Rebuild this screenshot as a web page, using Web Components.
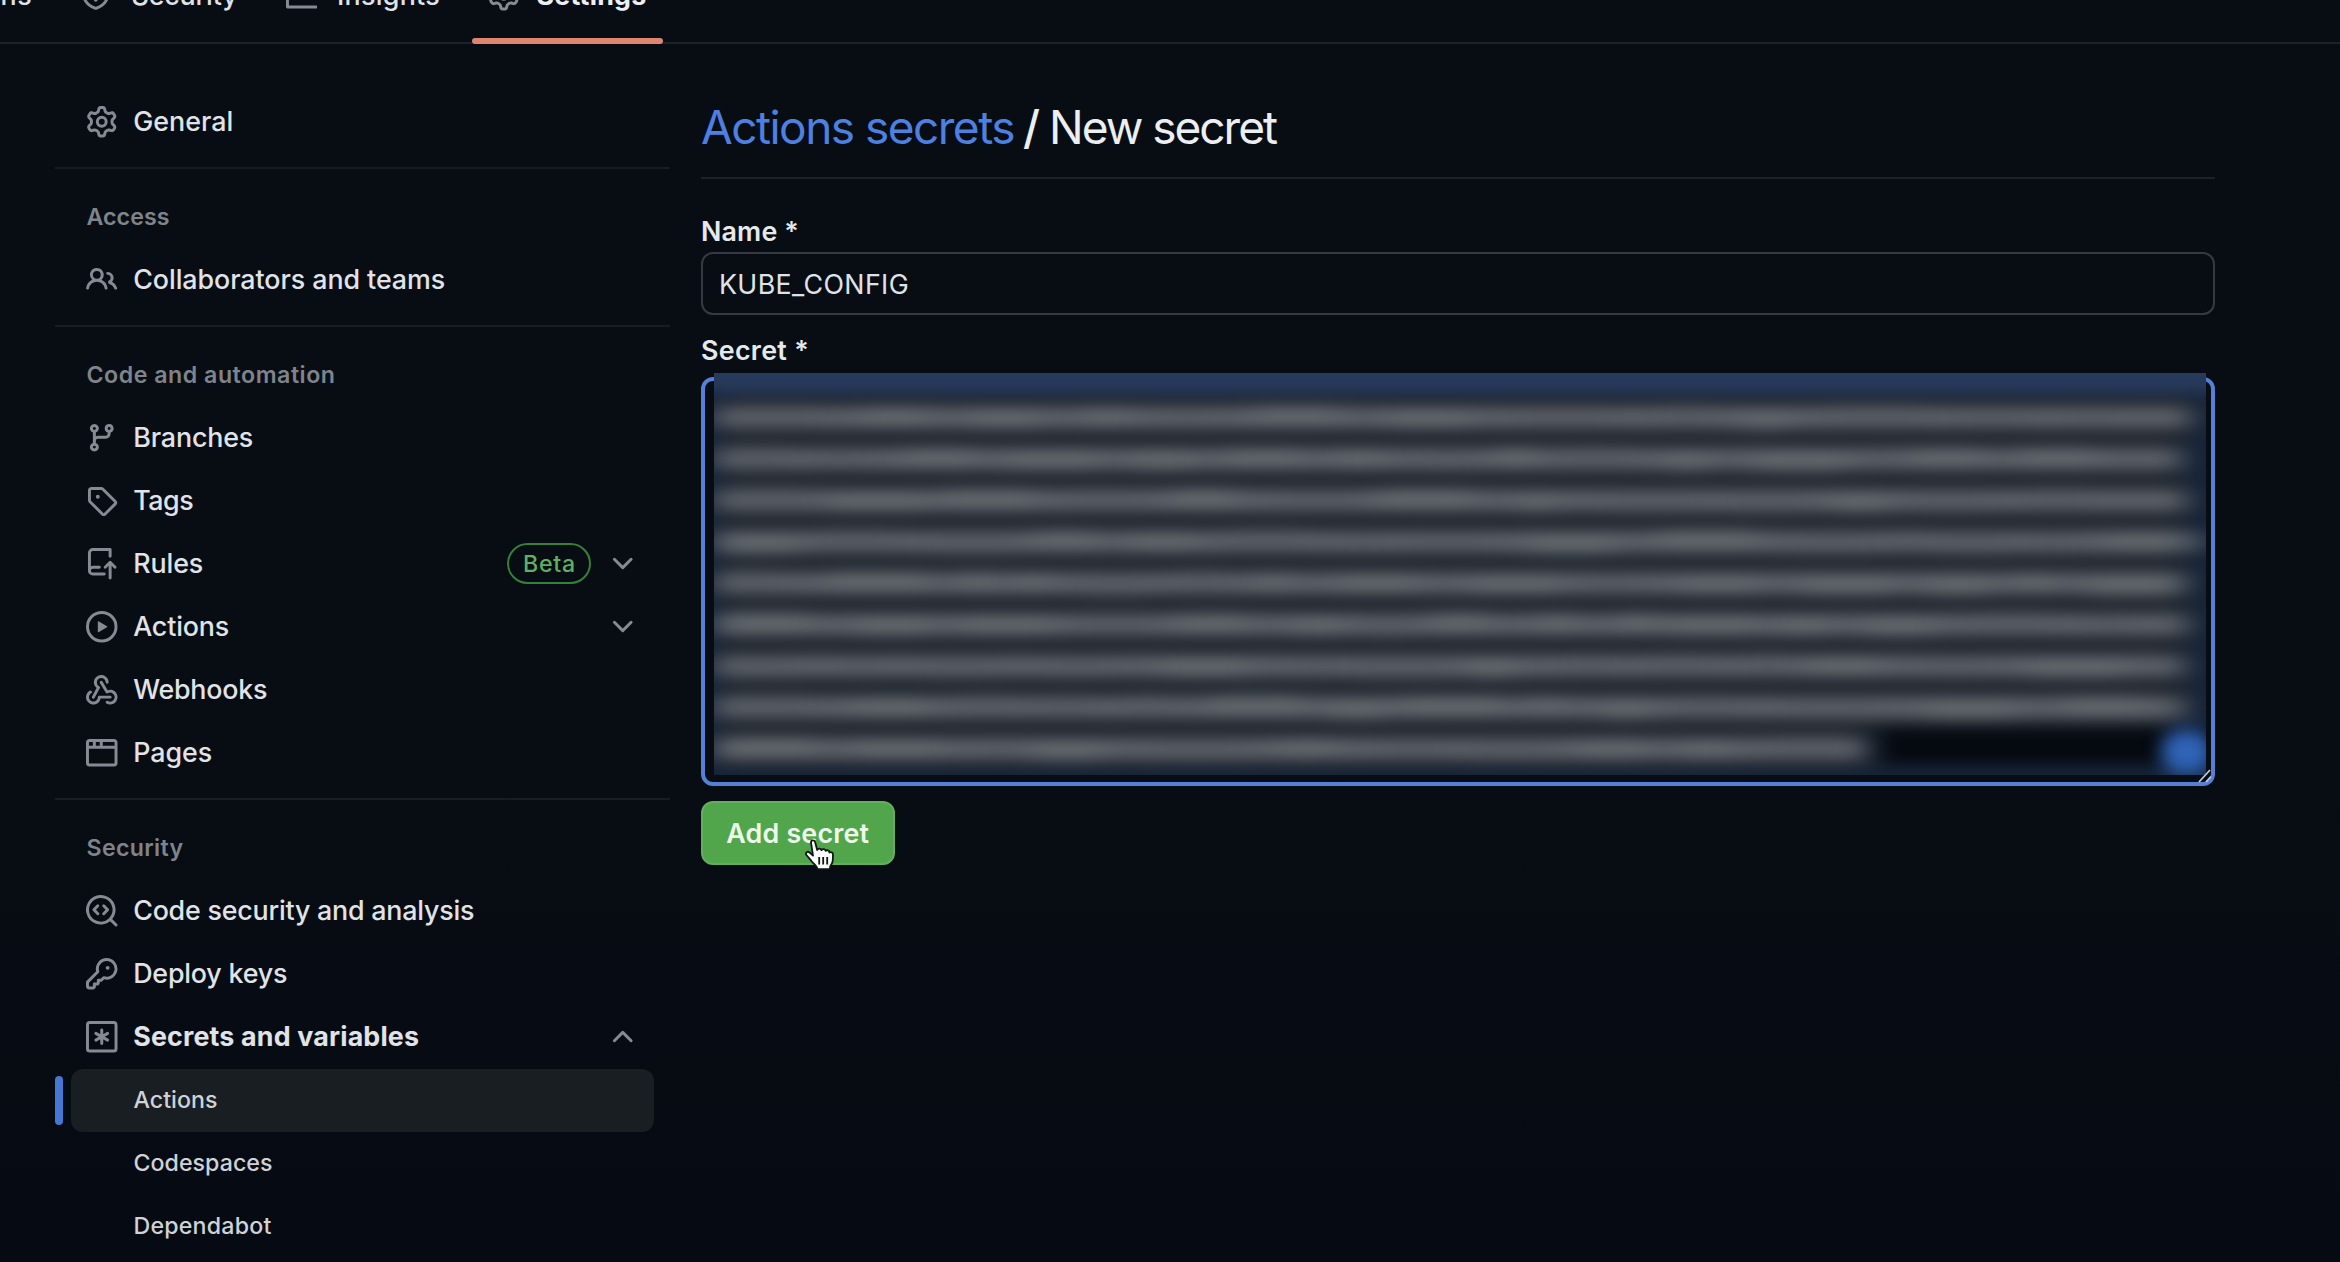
<!DOCTYPE html>
<html lang="en">
<head>
<meta charset="utf-8">
<title>New secret</title>
<style>
html,body{margin:0;height:100%;background:#070c13;overflow:hidden}
body{font-family:Inter,"Liberation Sans",sans-serif;color:#e3e6ea;-webkit-font-smoothing:antialiased}
</style>
</head>
<body>
<settings-page></settings-page>
<script>
const ICONS = {
gear:'<path d="M8 0a8.2 8.2 0 0 1 .701.031C9.444.095 9.99.645 10.16 1.29l.288 1.107c.018.066.079.158.212.224.231.114.454.243.668.386.123.082.233.09.299.071l1.103-.303c.644-.176 1.392.021 1.82.63.27.385.506.792.704 1.218.315.675.111 1.422-.364 1.891l-.814.806c-.049.048-.098.147-.088.294.016.257.016.515 0 .772-.01.147.038.246.088.294l.814.806c.475.469.679 1.216.364 1.891a7.977 7.977 0 0 1-.704 1.217c-.428.61-1.176.807-1.82.63l-1.102-.302c-.067-.019-.177-.011-.3.071a5.909 5.909 0 0 1-.668.386c-.133.066-.194.158-.211.224l-.29 1.106c-.168.646-.715 1.196-1.458 1.26a8.006 8.006 0 0 1-1.402 0c-.743-.064-1.289-.614-1.458-1.26l-.289-1.106c-.018-.066-.079-.158-.212-.224a5.738 5.738 0 0 1-.668-.386c-.123-.082-.233-.09-.299-.071l-1.103.303c-.644.176-1.392-.021-1.82-.63a8.12 8.12 0 0 1-.704-1.218c-.315-.675-.111-1.422.363-1.891l.815-.806c.05-.048.098-.147.088-.294a6.214 6.214 0 0 1 0-.772c.01-.147-.038-.246-.088-.294l-.815-.806C.635 6.045.431 5.298.746 4.623a7.92 7.92 0 0 1 .704-1.217c.428-.61 1.176-.807 1.82-.63l1.102.302c.067.019.177.011.3-.071.214-.143.437-.272.668-.386.133-.066.194-.158.211-.224l.29-1.106C6.009.645 6.556.095 7.299.03 7.53.01 7.764 0 8 0Zm-.571 1.525c-.036.003-.108.036-.137.146l-.289 1.105c-.147.561-.549.967-.998 1.189-.173.086-.34.183-.5.29-.417.278-.97.423-1.529.27l-1.103-.303c-.109-.03-.175.016-.195.045-.22.312-.412.644-.573.99-.014.031-.021.11.059.19l.815.806c.411.406.562.957.53 1.456a4.709 4.709 0 0 0 0 .582c.032.499-.119 1.05-.53 1.456l-.815.806c-.081.08-.073.159-.059.19.162.346.353.677.573.989.02.03.085.076.195.046l1.102-.303c.56-.153 1.113-.008 1.53.27.161.107.328.204.501.29.447.222.85.629.997 1.189l.289 1.105c.029.109.101.143.137.146a6.6 6.6 0 0 0 1.142 0c.036-.003.108-.036.137-.146l.289-1.105c.147-.561.549-.967.998-1.189.173-.086.34-.183.5-.29.417-.278.97-.423 1.529-.27l1.103.303c.109.029.175-.016.195-.045.22-.313.411-.644.573-.99.014-.031.021-.11-.059-.19l-.815-.806c-.411-.406-.562-.957-.53-1.456a4.709 4.709 0 0 0 0-.582c-.032-.499.119-1.05.53-1.456l.815-.806c.081-.08.073-.159.059-.19a6.464 6.464 0 0 0-.573-.989c-.02-.03-.085-.076-.195-.046l-1.102.303c-.56.153-1.113.008-1.53-.27a4.44 4.44 0 0 0-.501-.29c-.447-.222-.85-.629-.997-1.189l-.289-1.105c-.029-.11-.101-.143-.137-.146a6.6 6.6 0 0 0-1.142 0ZM11 8a3 3 0 1 1-6 0 3 3 0 0 1 6 0ZM9.5 8a1.5 1.5 0 1 0-3.001.001A1.5 1.5 0 0 0 9.5 8Z"/>',
shield:'<path d="M7.467.133a1.748 1.748 0 0 1 1.066 0l5.25 1.68A1.75 1.75 0 0 1 15 3.48V7c0 1.566-.32 3.182-1.303 4.682-.983 1.498-2.585 2.813-5.032 3.855a1.697 1.697 0 0 1-1.33 0c-2.447-1.042-4.049-2.357-5.032-3.855C1.32 10.182 1 8.566 1 7V3.48a1.75 1.75 0 0 1 1.217-1.667Zm.61 1.429a.25.25 0 0 0-.153 0l-5.25 1.68a.25.25 0 0 0-.174.238V7c0 1.358.275 2.666 1.057 3.86.784 1.194 2.121 2.34 4.366 3.297a.196.196 0 0 0 .154 0c2.245-.956 3.582-2.104 4.366-3.298C13.225 9.666 13.5 8.36 13.5 7V3.48a.251.251 0 0 0-.174-.237l-5.25-1.68ZM8.75 4.75v3a.75.75 0 0 1-1.5 0v-3a.75.75 0 0 1 1.5 0ZM9 10.5a1 1 0 1 1-2 0 1 1 0 0 1 2 0Z"/>',
graph:'<path d="M1.5 1.75V13.5h13.75a.75.75 0 0 1 0 1.5H.75a.75.75 0 0 1-.75-.75V1.75a.75.75 0 0 1 1.5 0Zm14.28 2.53-5.25 5.25a.75.75 0 0 1-1.06 0L7 7.06 4.28 9.78a.751.751 0 0 1-1.042-.018.751.751 0 0 1-.018-1.042l3.25-3.25a.75.75 0 0 1 1.06 0L10 7.94l4.72-4.72a.751.751 0 0 1 1.042.018.751.751 0 0 1 .018 1.042Z"/>',
people:'<path d="M2 5.5a3.5 3.5 0 1 1 5.898 2.549 5.508 5.508 0 0 1 3.034 4.084.75.75 0 1 1-1.482.235 4 4 0 0 0-7.9 0 .75.75 0 0 1-1.482-.236A5.507 5.507 0 0 1 3.102 8.05 3.493 3.493 0 0 1 2 5.5ZM11 4a3.001 3.001 0 0 1 2.22 5.018 5.01 5.01 0 0 1 2.56 3.012.749.749 0 0 1-.885.954.752.752 0 0 1-.549-.514 3.507 3.507 0 0 0-2.522-2.372.75.75 0 0 1-.574-.73v-.352a.75.75 0 0 1 .416-.672A1.5 1.5 0 0 0 11 5.5.75.75 0 0 1 11 4Zm-5.5-.5a2 2 0 1 0-.001 3.999A2 2 0 0 0 5.5 3.5Z"/>',
branch:'<path d="M9.5 3.25a2.25 2.25 0 1 1 3 2.122V6A2.5 2.5 0 0 1 10 8.5H6a1 1 0 0 0-1 1v1.128a2.251 2.251 0 1 1-1.5 0V5.372a2.25 2.25 0 1 1 1.5 0v1.836A2.493 2.493 0 0 1 6 7h4a1 1 0 0 0 1-1v-.628A2.25 2.25 0 0 1 9.5 3.25Zm-6 0a.75.75 0 1 0 1.5 0 .75.75 0 0 0-1.5 0Zm8.25-.75a.75.75 0 1 0 0 1.5.75.75 0 0 0 0-1.5ZM4.25 12a.75.75 0 1 0 0 1.5.75.75 0 0 0 0-1.5Z"/>',
tag:'<path d="M1 7.775V2.75C1 1.784 1.784 1 2.75 1h5.025c.464 0 .91.184 1.238.513l6.25 6.25a1.75 1.75 0 0 1 0 2.474l-5.026 5.026a1.75 1.75 0 0 1-2.474 0l-6.25-6.25A1.752 1.752 0 0 1 1 7.775Zm1.5 0c0 .066.026.13.073.177l6.25 6.25a.25.25 0 0 0 .354 0l5.025-5.025a.25.25 0 0 0 0-.354l-6.25-6.25a.25.25 0 0 0-.177-.073H2.75a.25.25 0 0 0-.25.25ZM6 5a1 1 0 1 1 0 2 1 1 0 0 1 0-2Z"/>',
push:'<path d="M1 2.5A2.5 2.5 0 0 1 3.5 0h8.75a.75.75 0 0 1 .75.75v3.5a.75.75 0 0 1-1.5 0V1.5h-8a1 1 0 0 0-1 1v6.708A2.493 2.493 0 0 1 3.5 9h3.25a.75.75 0 0 1 0 1.5H3.5a1 1 0 0 0 0 2h5.75a.75.75 0 0 1 0 1.5H3.5A2.5 2.5 0 0 1 1 11.5Zm13.23 7.79-1.225-1.225v6.184a.75.75 0 0 1-1.5 0V9.066L10.28 10.29a.75.75 0 0 1-1.06-1.061l2.505-2.504a.75.75 0 0 1 1.06 0L15.29 9.23a.751.751 0 0 1-.018 1.042.751.751 0 0 1-1.042.018Z"/>',
play:'<path d="M8 0a8 8 0 1 1 0 16A8 8 0 0 1 8 0ZM1.5 8a6.5 6.5 0 1 0 13 0 6.5 6.5 0 0 0-13 0Zm4.879-2.773 4.264 2.559a.25.25 0 0 1 0 .428l-4.264 2.559A.25.25 0 0 1 6 10.559V5.442a.25.25 0 0 1 .379-.215Z"/>',
webhook:'<path d="M5.5 4.25a2.25 2.25 0 0 1 4.5 0 .75.75 0 0 0 1.5 0 3.75 3.75 0 1 0-6.14 2.889l-2.272 4.258a.75.75 0 0 0 1.324.706L7 7.25a.75.75 0 0 0-.309-1.015A2.25 2.25 0 0 1 5.5 4.25Z"/><path d="M7.364 3.607a.75.75 0 0 1 1.03.257l2.608 4.349a3.75 3.75 0 1 1-.628 6.785.75.75 0 0 1 .752-1.299 2.25 2.25 0 1 0-.033-3.88.75.75 0 0 1-1.03-.256L7.107 4.636a.75.75 0 0 1 .257-1.03Z"/><path d="M2.9 8.776A.75.75 0 0 1 2.625 9.8 2.25 2.25 0 1 0 6 11.75a.75.75 0 0 1 .75-.751h5.5a.75.75 0 0 1 0 1.5H7.425a3.751 3.751 0 1 1-5.55-3.998.75.75 0 0 1 1.024.274Z"/>',
browser:'<path d="M0 2.75C0 1.784.784 1 1.75 1h12.5c.966 0 1.75.784 1.75 1.75v10.5A1.75 1.75 0 0 1 14.25 15H1.75A1.75 1.75 0 0 1 0 13.25ZM14.5 6h-13v7.25c0 .138.112.25.25.25h12.5a.25.25 0 0 0 .25-.25Zm-6-3.5v2h6V2.75a.25.25 0 0 0-.25-.25ZM5 2.5v2h2v-2Zm-3.25 0a.25.25 0 0 0-.25.25V4.5h2v-2Z"/>',
codescan:'<path d="M8.47 4.97a.75.75 0 0 0 0 1.06L9.94 7.5 8.47 8.97a.75.75 0 1 0 1.06 1.06l2-2a.75.75 0 0 0 0-1.06l-2-2a.75.75 0 0 0-1.06 0ZM6.53 6.03a.75.75 0 0 0-1.06-1.06l-2 2a.75.75 0 0 0 0 1.06l2 2a.75.75 0 1 0 1.06-1.06L5.06 7.5l1.47-1.47Z"/><path d="M12.246 13.307a7.501 7.501 0 1 1 1.06-1.06l2.474 2.473a.749.749 0 1 1-1.06 1.06ZM1.5 7.5a6.002 6.002 0 0 0 3.608 5.504 6.002 6.002 0 0 0 6.486-1.117.748.748 0 0 1 .292-.293A6 6 0 1 0 1.5 7.5Z"/>',
key:'<path d="M10.5 0a5.499 5.499 0 1 1-1.288 10.848l-.932.932a.749.749 0 0 1-.53.22H7v.75a.749.749 0 0 1-.22.53l-.5.5a.749.749 0 0 1-.53.22H5v.75a.749.749 0 0 1-.22.53l-.5.5a.749.749 0 0 1-.53.22h-2A1.75 1.75 0 0 1 0 14.25v-2c0-.199.079-.389.22-.53l4.932-4.932A5.5 5.5 0 0 1 10.5 0Zm-4 5.5c-.001.431.069.86.205 1.269a.75.75 0 0 1-.181.768L1.5 12.56v1.69c0 .138.112.25.25.25h1.69l.06-.06v-1.19a.75.75 0 0 1 .75-.75h1.19l.06-.06v-1.19a.75.75 0 0 1 .75-.75h1.19l1.023-1.025a.75.75 0 0 1 .768-.18A4 4 0 1 0 6.5 5.5ZM11 6a1 1 0 1 1 0-2 1 1 0 0 1 0 2Z"/>',
asterisk:'<g fill="none" stroke="currentColor"><rect x=".75" y=".75" width="14.5" height="14.5" rx="1.2" stroke-width="1.5"/><path d="M8 4.6v6.8M5 6.3l6 3.4M11 6.3 5 9.7" stroke-width="1.5" stroke-linecap="round"/></g>',
down:'<path d="M12.78 5.22a.749.749 0 0 1 0 1.06l-4.25 4.25a.749.749 0 0 1-1.06 0L3.22 6.28a.749.749 0 1 1 1.06-1.06L8 8.939l3.72-3.719a.749.749 0 0 1 1.06 0Z"/>',
up:'<path d="M3.22 10.53a.749.749 0 0 1 0-1.06l4.25-4.25a.749.749 0 0 1 1.06 0l4.25 4.25a.749.749 0 1 1-1.06 1.06L8 6.811 4.28 10.53a.749.749 0 0 1-1.06 0Z"/>'
};

function define(name, html, after) {
  const t = document.createElement('template');
  customElements.define(name, class extends HTMLElement {
    connectedCallback() {
      if (this.shadowRoot) return;
      t.innerHTML = typeof html === 'function' ? html(this) : html;
      this.attachShadow({mode: 'open'}).appendChild(t.content.cloneNode(true));
      if (after) after(this);
    }
  });
}

define('oct-icon', el => `<style>:host{display:block;flex:none;width:31.5px;height:31.5px;color:#868b93}svg{display:block;width:100%;height:100%}</style>
<svg viewBox="0 0 16 16" fill="currentColor">${ICONS[el.getAttribute('name')]}</svg>`);

/* Text tracked so that its line fills the width given in "w". */
define('fit-text', '<style>:host{display:inline-block;white-space:nowrap}span{display:inline-block}</style><span><slot></slot></span>', el => {
  const span = el.shadowRoot.querySelector('span');
  const w = +el.getAttribute('w'), n = el.textContent.length;
  span.style.letterSpacing = ((w - span.getBoundingClientRect().width) / n).toFixed(3) + 'px';
  el.style.width = w + 'px';
});

define('nav-tab', el => `<style>
:host{display:flex;align-items:center;gap:20px;padding:0 16px;font-size:26.8px;font-weight:500;position:relative;color:#e0e3e8}
:host([current]){font-weight:650;color:#eceff3;gap:17px}
:host([current])::after{content:"";position:absolute;left:0;right:0;bottom:-2px;height:6px;border-radius:3px;background:#dd8571}
</style>${el.hasAttribute('icon') ? `<oct-icon name="${el.getAttribute('icon')}"></oct-icon>` : ''}<slot></slot>`);

define('repo-nav', `<style>
:host{display:flex;height:94px;margin-top:-52px;border-bottom:2px solid #1c2127;box-sizing:content-box;gap:16px;flex:none}
nav-tab:first-of-type{margin-left:-32px}
</style>
<nav-tab><fit-text w="48">ons</fit-text></nav-tab>
<nav-tab icon="shield"><fit-text w="106">Security</fit-text></nav-tab>
<nav-tab icon="graph"><fit-text w="103">Insights</fit-text></nav-tab>
<nav-tab icon="gear" current><fit-text w="110">Settings</fit-text></nav-tab>`);

define('side-item', el => `<style>
:host{display:flex;align-items:center;height:63.1px;margin:0 16px;padding:0 15.5px 0 15px;box-sizing:border-box;font-size:26.8px;font-weight:500;color:#e0e3e7;border-radius:12px;position:relative}
:host([strong]){font-weight:650}
:host([sub]){font-size:23.2px;padding-left:62.5px;color:#cfd2d6;font-weight:470}
:host([selected]){background:#191e23}
:host([selected])::before{content:"";position:absolute;left:-16px;top:7.5px;width:8px;height:48.5px;border-radius:4px;background:#4677d3}
oct-icon:first-of-type{margin-right:15.7px}
:host(:not([sub])) fit-text{margin-bottom:1.4px}
.end{margin-left:auto;display:flex;align-items:center;gap:16px}
.end oct-icon{margin:0}
.beta{border:2px solid #35803a;border-radius:21px;width:84px;height:41px;box-sizing:border-box;display:flex;align-items:center;justify-content:center;color:#5cb062;font-size:23.2px;font-weight:500}
.beta fit-text{margin:0 0 0 1px!important}
</style>${el.hasAttribute('icon') ? `<oct-icon name="${el.getAttribute('icon')}"></oct-icon>` : ''}
<fit-text w="${el.getAttribute('w')}">${el.getAttribute('label')}</fit-text>
<span class="end">${el.hasAttribute('badge') ? `<span class="beta"><fit-text w="53">${el.getAttribute('badge')}</fit-text></span>` : ''}${el.hasAttribute('chevron') ? `<oct-icon name="${el.getAttribute('chevron')}"></oct-icon>` : ''}</span>`);

define('side-group', el => `<style>
:host{display:block;border-top:2px solid #181d23;margin-top:13.8px;padding-top:15.8px}
h3{margin:0 0 0 31.5px;height:63.1px;display:flex;align-items:center;font-size:23.2px;font-weight:600;color:#7f848b}
</style><h3><fit-text w="${el.getAttribute('w')}">${el.getAttribute('label')}</fit-text></h3><slot></slot>`);

define('side-nav', `<style>:host{display:block;width:615px;flex:none;margin-left:55px;padding-top:46.5px}</style>
<side-item icon="gear" label="General" w="100"></side-item>
<side-group label="Access" w="83">
<side-item icon="people" label="Collaborators and teams" w="312"></side-item>
</side-group>
<side-group label="Code and automation" w="249">
<side-item icon="branch" label="Branches" w="120"></side-item>
<side-item icon="tag" label="Tags" w="60"></side-item>
<side-item icon="push" label="Rules" w="70" badge="Beta" chevron="down"></side-item>
<side-item icon="play" label="Actions" w="96" chevron="down"></side-item>
<side-item icon="webhook" label="Webhooks" w="134"></side-item>
<side-item icon="browser" label="Pages" w="79"></side-item>
</side-group>
<side-group label="Security" w="97">
<side-item icon="codescan" label="Code security and analysis" w="341"></side-item>
<side-item icon="key" label="Deploy keys" w="154"></side-item>
<side-item icon="asterisk" label="Secrets and variables" w="286" chevron="up" strong></side-item>
<side-item sub selected label="Actions" w="84"></side-item>
<side-item sub label="Codespaces" w="139"></side-item>
<side-item sub label="Dependabot" w="138"></side-item>
</side-group>`);

/* Redacted value: soft bands, one for each line of the hidden text. */
define('redacted-text', el => {
  let seed = 7; const rnd = () => (seed = (seed * 16807) % 2147483647) / 2147483647;
  const W = 1492; let lines = '';
  for (let i = 0; i < 9; i++) {
    const y = 44.6 + i * 41.4, end = i === 8 ? 1150 : W - 18 - rnd() * 10;
    lines += `<rect x="4" y="${y - 20.7}" width="${end}" height="41.4" fill="#232831"/>`;
    lines += `<rect x="0" y="${y - 10.5}" width="${end + 2}" height="21" fill="#5b5f67"/>`;
    for (let x = 10; x < end - 70;) {
      const w = 25 + rnd() * 75;
      lines += `<rect x="${x.toFixed(0)}" y="${(y - 10.5 + (rnd() - .5) * 5).toFixed(1)}" width="${w.toFixed(0)}" height="21" fill="${rnd() > .5 ? '#686c71' : '#565a62'}" opacity=".6"/>`;
      x += w + 15 + rnd() * 40;
    }
  }
  return `<style>:host{display:block;width:1492px;height:402.5px;overflow:hidden}svg{display:block}</style>
<svg width="1492" height="403" viewBox="0 0 1492 403" color-interpolation-filters="sRGB">
<defs><filter id="b" x="-5%" y="-10%" width="110%" height="120%"><feGaussianBlur stdDeviation="14 7"/></filter>
<filter id="c" x="-80%" y="-80%" width="260%" height="260%"><feGaussianBlur stdDeviation="9"/></filter></defs>
<rect width="1492" height="403" fill="#12202f"/>
<g filter="url(#b)"><rect x="-40" y="-30" width="1572" height="460" fill="#152337"/><rect x="-40" y="-30" width="1572" height="50" fill="#273a5c"/>${lines}
<rect x="1162" y="355" width="370" height="36" fill="#050910"/></g>
<rect x="1447" y="356" width="52" height="46" rx="22" fill="#3064b8" filter="url(#c)"/>
</svg>`;
});

define('text-field', `<style>
:host{display:flex;align-items:center;height:63.5px;box-sizing:border-box;border:2px solid #353a42;border-radius:12px;padding-left:16px;font-size:26.8px;color:#dfe2e6;font-weight:430}
</style><slot></slot>`);

define('secret-area', `<style>
:host{display:block;position:relative;height:409px;box-sizing:border-box;border:4px solid #5580d6;border-radius:12px}
redacted-text{position:absolute;left:9px;top:-8.5px}
svg{position:absolute;right:-2px;bottom:-1px}
</style><redacted-text></redacted-text>
<svg width="16" height="15" viewBox="0 0 16 15" stroke="#c3cbe0" stroke-width="1.8" fill="none"><path d="M2 14 13 2M9 14l5-5.5"/></svg>`);

define('primary-button', `<style>
:host{display:flex;align-items:center;justify-content:center;position:relative;width:193.5px;height:63.5px;box-sizing:border-box;border-radius:12px;background:#51a64b;border:2px solid #62ae5e;color:#effbea;font-size:26.8px;font-weight:600}
svg{position:absolute;left:101px;top:36px}
</style><slot></slot>
<svg width="32" height="33" viewBox="0 0 32 33"><path d="M7 3.6C7 1 10.6.6 11.2 3.4l2 7.6c.6-1.9 3.8-1.8 4.3.2.9-1.6 3.8-1.3 4.1.7 1.2-1.3 3.8-.6 3.8 1.6 1.4-1 3.7 0 3.6 2.2l-.3 6.5c-.3 2.5-2.4 4-2.7 6.2v1.8H13.6c-.3-3.1-4.3-5.6-6.8-9L2.4 16c-1.4-2.3 1.2-4.3 3.2-2.5l3.4 3.1Z" fill="#fff" stroke="#101612" stroke-width="1.8" stroke-linejoin="round"/><path d="M15.2 18v7.6M19.2 18v7.6M23.2 18v7.6" stroke="#101612" stroke-width="1.8"/></svg>`);

define('secret-form', `<style>
:host{display:block;width:1513.5px;margin-left:31px;padding-top:52.5px}
h1{margin:0;height:80.5px;border-bottom:2px solid #1c2228;font-size:46px;font-weight:430;line-height:61px;white-space:nowrap;display:flex;color:#eceff2}
h1 a{color:#4d80e0}
.slash{margin:0 9px 0 9px;font-weight:500}
label{display:flex;align-items:flex-end;font-size:26.8px;font-weight:600;color:#e6e9ec;line-height:32px}
.n{height:72.5px;padding-bottom:5px;box-sizing:border-box}
.s{height:62px;padding-bottom:11px;box-sizing:border-box}
text-field fit-text{padding-top:1px}
primary-button{margin-top:15px}
</style>
<h1><a><fit-text w="313">Actions secrets</fit-text></a><span class="slash"><fit-text w="17">/</fit-text></span><fit-text w="227">New secret</fit-text></h1>
<label class="n"><fit-text w="98">Name *</fit-text></label>
<text-field><fit-text w="190">KUBE_CONFIG</fit-text></text-field>
<label class="s"><fit-text w="108">Secret *</fit-text></label>
<secret-area></secret-area>
<primary-button><fit-text w="143">Add secret</fit-text></primary-button>`);

define('settings-page', `<style>:host{display:flex;flex-direction:column;height:1262px;overflow:hidden;background:linear-gradient(#080d14,#080d14 60%,#060a12)}main{display:flex;flex:none;align-items:flex-start}</style>
<repo-nav></repo-nav><main><side-nav></side-nav><secret-form></secret-form></main>`);
</script>
</body>
</html>
